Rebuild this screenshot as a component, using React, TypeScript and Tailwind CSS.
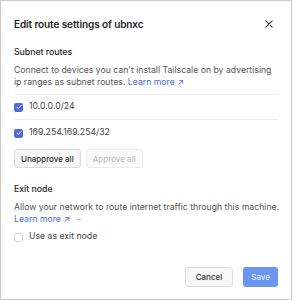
import React from "react";

function CheckBox({ checked }: { checked: boolean }) {
  if (!checked) {
    return <span className="w-[9px] h-[9px] rounded-[2px] border border-[#d4d4d4] bg-white shrink-0" />;
  }
  return (
    <span className="w-[9px] h-[9px] rounded-[2px] bg-[#4b6fd6] flex items-center justify-center shrink-0">
      <svg width="6" height="6" viewBox="0 0 12 12" fill="none">
        <path d="M2 6.5l2.5 2.5L10 3" stroke="white" strokeWidth="1.8" strokeLinecap="round" strokeLinejoin="round" />
      </svg>
    </span>
  );
}

function LearnMore() {
  return <span className="text-[#4a6fd1] whitespace-nowrap">Learn more ↗</span>;
}

export default function App() {
  return (
    <div
      className="w-[292px] h-[300px] border border-[#c9c9c9] bg-white text-[#242424] px-[13px] flex flex-col"
      style={{ fontFamily: "Inter, 'Noto Sans', sans-serif" }}
    >
      {/* header */}
      <div className="flex items-center justify-between h-[12px] mt-[17px]">
        <h1 className="text-[10px] font-semibold tracking-[-0.1px]">Edit route settings of ubnxc</h1>
        <svg width="8" height="8" viewBox="0 0 10 10" className="mr-[5px]">
          <path d="M1 1l8 8M9 1l-8 8" stroke="#333" strokeWidth="1.4" strokeLinecap="round" />
        </svg>
      </div>

      {/* subnet routes */}
      <h2 className="text-[8.7px] font-medium leading-[12px] mt-[16px]">Subnet routes</h2>
      <p className="text-[8.7px] text-[#555] leading-[12px] mt-[6px]">
        <span className="whitespace-nowrap">Connect to devices you can't install Tailscale on by advertising</span>
        <br />
        ip ranges as subnet routes. <LearnMore />
      </p>

      <div className="mt-[6px] border-t border-[#ececec]">
        <div className="flex items-center gap-[6px] h-[25px] border-b border-[#ececec]">
          <CheckBox checked />
          <span className="text-[8.7px] text-[#444]">10.0.0.0/24</span>
        </div>
        <div className="flex items-center gap-[6px] h-[26px]">
          <CheckBox checked />
          <span className="text-[8.7px] text-[#444]">169.254.169.254/32</span>
        </div>
      </div>

      <div className="flex gap-[5px] mt-[3px]">
        <button className="h-[19px] px-[6px] rounded-[3px] border border-[#dcdcdc] bg-[#f7f7f7] text-[8px] font-medium text-[#333]">
          Unapprove all
        </button>
        <button className="h-[19px] px-[6px] rounded-[3px] border border-[#ededed] bg-[#fafafa] text-[8px] font-medium text-[#c4c4c4]">
          Approve all
        </button>
      </div>

      {/* exit node */}
      <h2 className="text-[8.7px] font-medium leading-[12px] mt-[15px]">Exit node</h2>
      <p className="text-[8.7px] text-[#555] leading-[12px] mt-[6px]">
        <span className="whitespace-nowrap">Allow your network to route internet traffic through this machine.</span>
        <br />
        <LearnMore /> <span className="text-[#aaa] ml-[4px]">–</span>
      </p>
      <div className="flex items-center gap-[6px] mt-[6px] h-[12px]">
        <CheckBox checked={false} />
        <span className="text-[8.7px] text-[#444]">Use as exit node</span>
      </div>

      <div className="flex justify-end gap-[10px] mt-auto mb-[12px]">
        <button className="h-[20px] px-[10px] rounded-[3px] border border-[#dedede] bg-[#f8f8f8] text-[8px] font-medium text-[#333]">
          Cancel
        </button>
        <button className="h-[20px] px-[8px] rounded-[3px] bg-[#6b95ee] text-[8px] font-medium text-[#dde7fc]">
          Save
        </button>
      </div>
    </div>
  );
}
